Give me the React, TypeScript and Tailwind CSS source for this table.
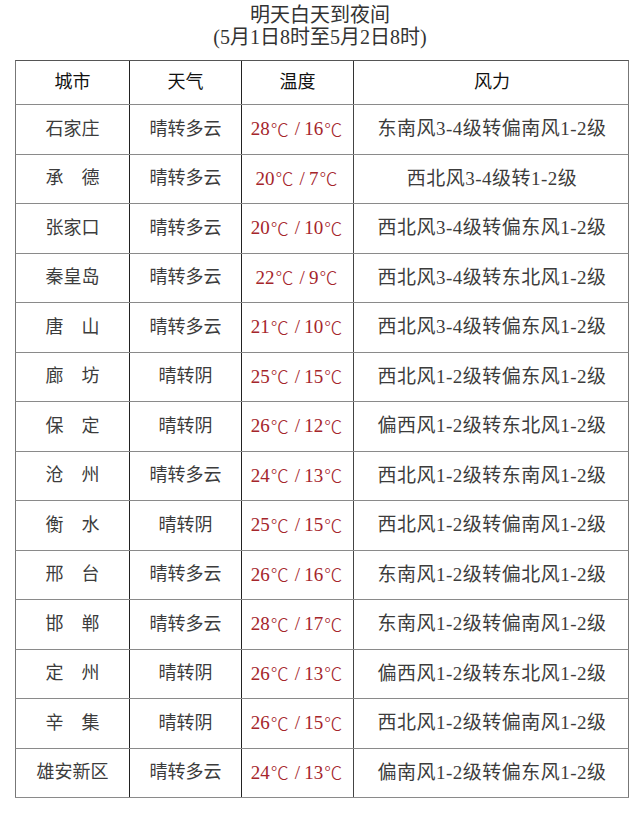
import React from "react";

const rows: [string, string, string, string][] = [
  ["石家庄", "晴转多云", "28℃/16℃", "东南风3-4级转偏南风1-2级"],
  ["承　德", "晴转多云", "20℃/7℃", "西北风3-4级转1-2级"],
  ["张家口", "晴转多云", "20℃/10℃", "西北风3-4级转偏东风1-2级"],
  ["秦皇岛", "晴转多云", "22℃/9℃", "西北风3-4级转东北风1-2级"],
  ["唐　山", "晴转多云", "21℃/10℃", "西北风3-4级转偏东风1-2级"],
  ["廊　坊", "晴转阴", "25℃/15℃", "西北风1-2级转偏东风1-2级"],
  ["保　定", "晴转阴", "26℃/12℃", "偏西风1-2级转东北风1-2级"],
  ["沧　州", "晴转多云", "24℃/13℃", "西北风1-2级转东南风1-2级"],
  ["衡　水", "晴转阴", "25℃/15℃", "西北风1-2级转偏南风1-2级"],
  ["邢　台", "晴转多云", "26℃/16℃", "东南风1-2级转偏北风1-2级"],
  ["邯　郸", "晴转多云", "28℃/17℃", "东南风1-2级转偏南风1-2级"],
  ["定　州", "晴转阴", "26℃/13℃", "偏西风1-2级转东北风1-2级"],
  ["辛　集", "晴转阴", "26℃/15℃", "西北风1-2级转偏南风1-2级"],
  ["雄安新区", "晴转多云", "24℃/13℃", "偏南风1-2级转偏东风1-2级"],
];

const font = {
  fontFamily: '"Liberation Serif", "Noto Sans CJK SC", serif',
};

function Temp({ t }: { t: string }) {
  const [a, b] = t.split("/");
  const hi = a.replace("℃", "");
  const lo = b.replace("℃", "");
  return (
    <span className="flex items-center">
      <span>{hi}</span>
      <span className="font-['Noto_Sans_CJK_SC'] font-light text-[18px] pl-[1px] pr-[2px]">℃</span>
      <span className="px-[4px]">/</span>
      <span>{lo}</span>
      <span className="font-['Noto_Sans_CJK_SC'] font-light text-[18px] pl-[1px] pr-[2px]">℃</span>
    </span>
  );
}

export default function App() {
  return (
    <div
      className="w-[640px] h-[827px] bg-white overflow-hidden"
      style={font}
    >
      <div className="pt-[4px] text-center text-[20px] leading-[22px] text-[#333]">
        <div>明天白天到夜间</div>
        <div>(5月1日8时至5月2日8时)</div>
      </div>
      <div className="ml-[15px] mt-[12px] w-[614px]">
        <div className="grid grid-cols-[113px_112px_112px_277px] h-[44px] border-t border-[#555] border-l border-l-[#777] border-r border-r-[#777] text-[18px] text-[#111]">
          <div className="flex items-center justify-center">城市</div>
          <div className="flex items-center justify-center border-l border-[#222]">天气</div>
          <div className="flex items-center justify-center border-l border-[#222]">温度</div>
          <div className="flex items-center justify-center border-l border-[#333]">风力</div>
        </div>
        {rows.map((r, i) => (
          <div
            key={i}
            className="grid grid-cols-[113px_112px_112px_277px] h-[49.5px] border-t border-[#8a8a8a] border-l border-l-[#777] border-r border-r-[#777] text-[18px] text-[#3c3c3c]"
          >
            <div className="flex items-center justify-center">{r[0]}</div>
            <div className="flex items-center justify-center border-l border-[#222]">{r[1]}</div>
            <div className="flex items-center justify-center border-l border-[#222] text-[#a5252b] text-[19px]">
              <Temp t={r[2]} />
            </div>
            <div className="flex items-center justify-center border-l border-[#444] text-[19px] tracking-[0.5px]">{r[3]}</div>
          </div>
        ))}
        <div className="border-t border-[#8a8a8a] w-[614px]" />
      </div>
    </div>
  );
}
